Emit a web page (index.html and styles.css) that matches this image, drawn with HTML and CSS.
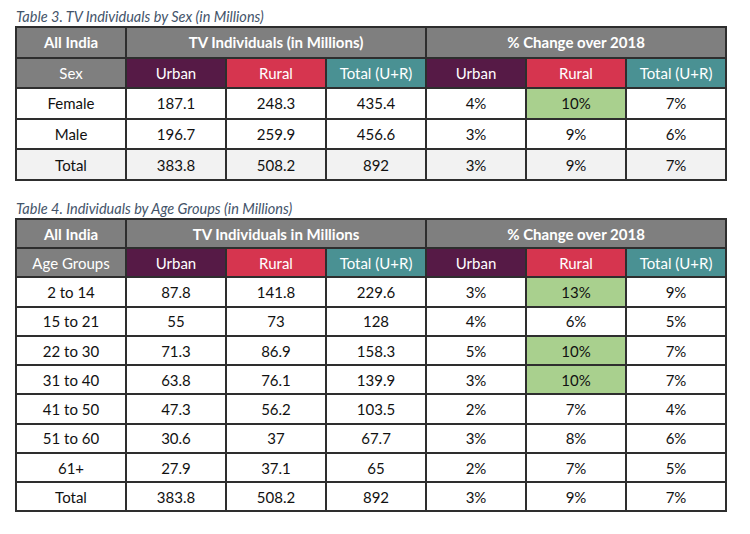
FILE: index.html
```html
<!DOCTYPE html>
<html>
<head>
<meta charset="utf-8">
<link rel="stylesheet" href="styles.css">
</head>
<body>
<div class="page">
  <div class="caption">Table 3. TV Individuals by Sex (in Millions)</div>
  <table class="data t3">
    <colgroup><col class="c1"><col><col><col><col><col><col></colgroup>
    <tr class="h1"><th>All India</th><th colspan="3">TV Individuals (in Millions)</th><th colspan="3">% Change over 2018</th></tr>
    <tr class="h2"><th class="g">Sex</th><th class="u">Urban</th><th class="r">Rural</th><th class="t">Total (U+R)</th><th class="u">Urban</th><th class="r">Rural</th><th class="t">Total (U+R)</th></tr>
    <tr><td>Female</td><td>187.1</td><td>248.3</td><td>435.4</td><td>4%</td><td class="hl">10%</td><td>7%</td></tr>
    <tr><td>Male</td><td>196.7</td><td>259.9</td><td>456.6</td><td>3%</td><td>9%</td><td>6%</td></tr>
    <tr class="tot"><td>Total</td><td>383.8</td><td>508.2</td><td>892</td><td>3%</td><td>9%</td><td>7%</td></tr>
  </table>

  <div class="caption c2">Table 4. Individuals by Age Groups (in Millions)</div>
  <table class="data t4">
    <colgroup><col class="c1"><col><col><col><col><col><col></colgroup>
    <tr class="h1"><th>All India</th><th colspan="3">TV Individuals in Millions</th><th colspan="3">% Change over 2018</th></tr>
    <tr class="h2"><th class="g">Age Groups</th><th class="u">Urban</th><th class="r">Rural</th><th class="t">Total (U+R)</th><th class="u">Urban</th><th class="r">Rural</th><th class="t">Total (U+R)</th></tr>
    <tr><td>2 to 14</td><td>87.8</td><td>141.8</td><td>229.6</td><td>3%</td><td class="hl">13%</td><td>9%</td></tr>
    <tr><td>15 to 21</td><td>55</td><td>73</td><td>128</td><td>4%</td><td>6%</td><td>5%</td></tr>
    <tr><td>22 to 30</td><td>71.3</td><td>86.9</td><td>158.3</td><td>5%</td><td class="hl">10%</td><td>7%</td></tr>
    <tr><td>31 to 40</td><td>63.8</td><td>76.1</td><td>139.9</td><td>3%</td><td class="hl">10%</td><td>7%</td></tr>
    <tr><td>41 to 50</td><td>47.3</td><td>56.2</td><td>103.5</td><td>2%</td><td>7%</td><td>4%</td></tr>
    <tr><td>51 to 60</td><td>30.6</td><td>37</td><td>67.7</td><td>3%</td><td>8%</td><td>6%</td></tr>
    <tr><td>61+</td><td>27.9</td><td>37.1</td><td>65</td><td>2%</td><td>7%</td><td>5%</td></tr>
    <tr><td>Total</td><td>383.8</td><td>508.2</td><td>892</td><td>3%</td><td>9%</td><td>7%</td></tr>
  </table>
</div>
</body>
</html>
```

FILE: styles.css
```css
html, body {
  margin: 0;
  padding: 0;
  background: #ffffff;
}
.page {
  padding: 8px 0 0 15px;
  font-family: Lato, "Open Sans", "Liberation Sans", sans-serif;
  color: #111;
}
.caption {
  font-style: italic;
  font-size: 14.5px;
  line-height: 17px;
  color: #44546a;
  padding-left: 1px;
  height: 18px;
}
.caption.c2 {
  margin-top: 19px;
  height: 18px;
}
.data {
  border-collapse: collapse;
  width: 711px;
  table-layout: fixed;
  font-size: 15px;
}
.data col { width: 100px; }
.data col.c1 { width: 110px; }
.data th, .data td {
  border: 2px solid #2e2e2e;
  text-align: center;
  padding: 0;
  font-weight: normal;
}
.t3 tr { height: 30.6px; }
.t4 tr { height: 29px; }
.t4 tr:nth-child(odd) { height: 29.5px; }
.h1 th {
  background: #7f7f7f;
  color: #ffffff;
  font-weight: bold;
}
.h2 th { color: #ffffff; }
.h2 .g { background: #7f7f7f; }
.h2 .u { background: #561a46; }
.h2 .r { background: #d6354f; }
.h2 .t { background: #4a9193; }
.data td.hl { background: #a9d08e; }
.t3 .tot td { background: #f2f2f2; }
```
